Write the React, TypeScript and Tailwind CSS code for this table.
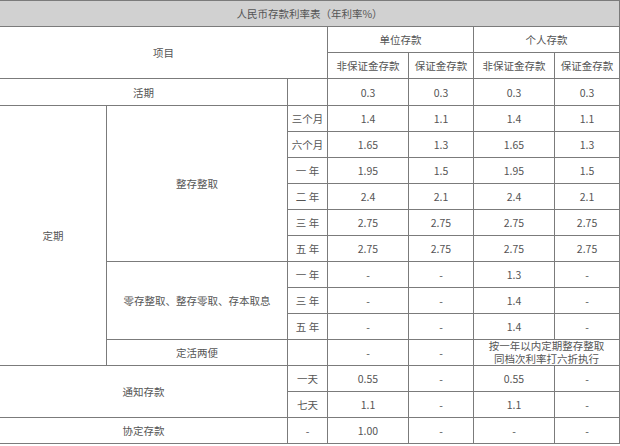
const cell = "border border-[#7b7b7b] text-center align-middle p-0";

type Row = { label: string; v: string[] };

const zhengcun: Row[] = [
  { label: "三个月", v: ["1.4", "1.1", "1.4", "1.1"] },
  { label: "六个月", v: ["1.65", "1.3", "1.65", "1.3"] },
  { label: "一 年", v: ["1.95", "1.5", "1.95", "1.5"] },
  { label: "二 年", v: ["2.4", "2.1", "2.4", "2.1"] },
  { label: "三 年", v: ["2.75", "2.75", "2.75", "2.75"] },
  { label: "五 年", v: ["2.75", "2.75", "2.75", "2.75"] },
];

const lingcun: Row[] = [
  { label: "一 年", v: ["-", "-", "1.3", "-"] },
  { label: "三 年", v: ["-", "-", "1.4", "-"] },
  { label: "五 年", v: ["-", "-", "1.4", "-"] },
];

const Values = ({ v }: { v: string[] }) => (
  <>
    {v.map((x, i) => (
      <td key={i} className={cell}>
        {x}
      </td>
    ))}
  </>
);

export default function App() {
  return (
    <div
      className="w-[620px] h-[446px] overflow-hidden bg-white text-[#555] text-[10.5px] leading-[13px]"
      style={{ fontFamily: '"Noto Sans CJK SC", "Noto Sans", sans-serif' }}
    >
      <div className="ml-[-1px]">
        <table className="border-collapse table-fixed w-[620px]">
          <colgroup>
            <col className="w-[107px]" />
            <col className="w-[181px]" />
            <col className="w-[40px]" />
            <col className="w-[81px]" />
            <col className="w-[65px]" />
            <col className="w-[81px]" />
            <col className="w-[65px]" />
          </colgroup>
          <tbody>
            <tr className="h-[26px]">
              <td colSpan={7} className={`${cell} bg-[#d1d1d1]`}>
                人民币存款利率表（年利率%）
              </td>
            </tr>
            <tr className="h-[26px]">
              <td colSpan={3} rowSpan={2} className={cell}>
                项目
              </td>
              <td colSpan={2} className={cell}>
                单位存款
              </td>
              <td colSpan={2} className={cell}>
                个人存款
              </td>
            </tr>
            <tr className="h-[26px]">
              <td className={cell}>非保证金存款</td>
              <td className={cell}>保证金存款</td>
              <td className={cell}>非保证金存款</td>
              <td className={cell}>保证金存款</td>
            </tr>
            <tr className="h-[27px]">
              <td colSpan={2} className={cell}>
                活期
              </td>
              <td className={cell}></td>
              <Values v={["0.3", "0.3", "0.3", "0.3"]} />
            </tr>

            {/* 定期 */}
            {zhengcun.map((r, i) => (
              <tr key={"z" + i} className="h-[26px]">
                {i === 0 && (
                  <td rowSpan={10} className={cell}>
                    定期
                  </td>
                )}
                {i === 0 && (
                  <td rowSpan={6} className={cell}>
                    整存整取
                  </td>
                )}
                <td className={cell}>{r.label}</td>
                <Values v={r.v} />
              </tr>
            ))}
            {lingcun.map((r, i) => (
              <tr key={"l" + i} className="h-[26px]">
                {i === 0 && (
                  <td rowSpan={3} className={cell}>
                    零存整取、整存零取、存本取息
                  </td>
                )}
                <td className={cell}>{r.label}</td>
                <Values v={r.v} />
              </tr>
            ))}
            <tr className="h-[26px]">
              <td className={cell}>定活两便</td>
              <td className={cell}></td>
              <td className={cell}>-</td>
              <td className={cell}>-</td>
              <td colSpan={2} className={`${cell} align-top leading-[12.5px]`}>
                <div>按一年以内定期整存整取</div>
                <div>同档次利率打六折执行</div>
              </td>
            </tr>

            {/* 通知存款 */}
            <tr className="h-[26px]">
              <td colSpan={2} rowSpan={2} className={cell}>
                通知存款
              </td>
              <td className={cell}>一天</td>
              <Values v={["0.55", "-", "0.55", "-"]} />
            </tr>
            <tr className="h-[26px]">
              <td className={cell}>七天</td>
              <Values v={["1.1", "-", "1.1", "-"]} />
            </tr>
            <tr className="h-[26px]">
              <td colSpan={2} className={cell}>
                协定存款
              </td>
              <td className={cell}>-</td>
              <Values v={["1.00", "-", "-", "-"]} />
            </tr>
          </tbody>
        </table>
      </div>
      <p className="pt-[1px] text-[13px] leading-[16px] text-[#222]">
        注：以上利率自2015年10月24日起执行。
      </p>
    </div>
  );
}
